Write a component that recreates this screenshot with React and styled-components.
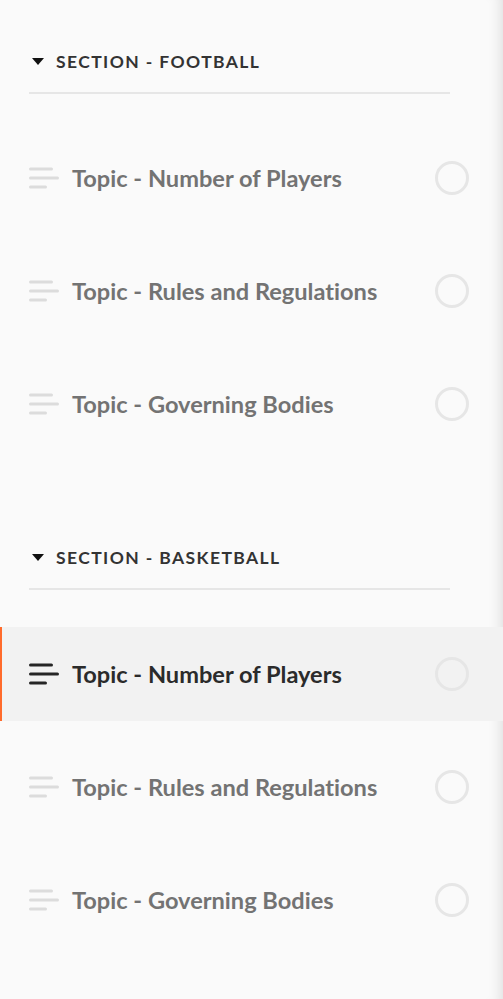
import React from "react";
import styled, { createGlobalStyle } from "styled-components";

const Global = createGlobalStyle`
  html, body {
    margin: 0;
    padding: 0;
    background: #fafafa;
  }
  body {
    font-family: Lato, "Open Sans", sans-serif;
    font-variant-ligatures: none;
  }
`;

const Sidebar = styled.nav`
  min-height: 999px;
  width: 503px;
  box-sizing: border-box;
  padding-top: 49px;
  background: #fafafa;
  box-shadow: inset -14px 0 14px -12px rgba(0, 0, 0, 0.12);
  display: flex;
  flex-direction: column;
  gap: 94px;
`;

const Section = styled.section`
  display: flex;
  flex-direction: column;
`;

const Header = styled.div`
  display: flex;
  align-items: center;
  gap: 12px;
  height: 24px;
  margin: 0 53px 0 29px;
  padding: 0 0 19px 3px;
  border-bottom: 2px solid #e6e6e6;
`;

const Caret = styled.span`
  width: 0;
  height: 0;
  border-left: 6.5px solid transparent;
  border-right: 6.5px solid transparent;
  border-top: 7px solid #111;
`;

const HeaderTitle = styled.h2`
  margin: 0;
  font-size: 17.5px;
  font-weight: 700;
  letter-spacing: 1.4px;
  text-transform: uppercase;
  color: #333;
`;

const List = styled.ul`
  list-style: none;
  margin: 37px 0 0;
  padding: 0;
  display: flex;
  flex-direction: column;
  gap: 19px;
`;

const Row = styled.li`
  position: relative;
  height: 94px;
  display: flex;
  align-items: center;
  padding: 0 34px 0 29px;
  background: ${(p) => (p.$active ? "#f2f2f2" : "transparent")};
  &::before {
    content: "";
    position: absolute;
    left: 0;
    top: 0;
    bottom: 0;
    width: 2px;
    background: ${(p) => (p.$active ? "#ff6b2b" : "transparent")};
  }
`;

const Title = styled.span`
  flex: 1;
  margin-left: 13px;
  font-size: 23.6px;
  font-weight: 700;
  color: ${(p) => (p.$active ? "#2b2b2b" : "#737373")};
`;

const Check = styled.span`
  width: 28px;
  height: 28px;
  border-radius: 50%;
  border: 3px solid #e6e6e6;
`;

const LinesIcon = ({ active }) => {
  const c = active ? "#262626" : "#dcdcdc";
  return (
    <svg width="30" height="22" viewBox="0 0 30 22">
      <g stroke={c} strokeWidth="3" strokeLinecap="round">
        <line x1="1.5" y1="2" x2="22.5" y2="2" />
        <line x1="1.5" y1="11" x2="28.5" y2="11" />
        <line x1="1.5" y1="20" x2="16.5" y2="20" />
      </g>
    </svg>
  );
};

const topics = [
  "Topic - Number of Players",
  "Topic - Rules and Regulations",
  "Topic - Governing Bodies",
];

const sections = [
  { name: "Section - Football", active: -1 },
  { name: "Section - Basketball", active: 0 },
];

export default function App() {
  return (
    <>
      <Global />
      <Sidebar>
        {sections.map((s) => (
          <Section key={s.name}>
            <Header>
              <Caret />
              <HeaderTitle>{s.name}</HeaderTitle>
            </Header>
            <List>
              {topics.map((t, i) => (
                <Row key={t} $active={i === s.active}>
                  <LinesIcon active={i === s.active} />
                  <Title $active={i === s.active}>{t}</Title>
                  <Check />
                </Row>
              ))}
            </List>
          </Section>
        ))}
      </Sidebar>
    </>
  );
}
